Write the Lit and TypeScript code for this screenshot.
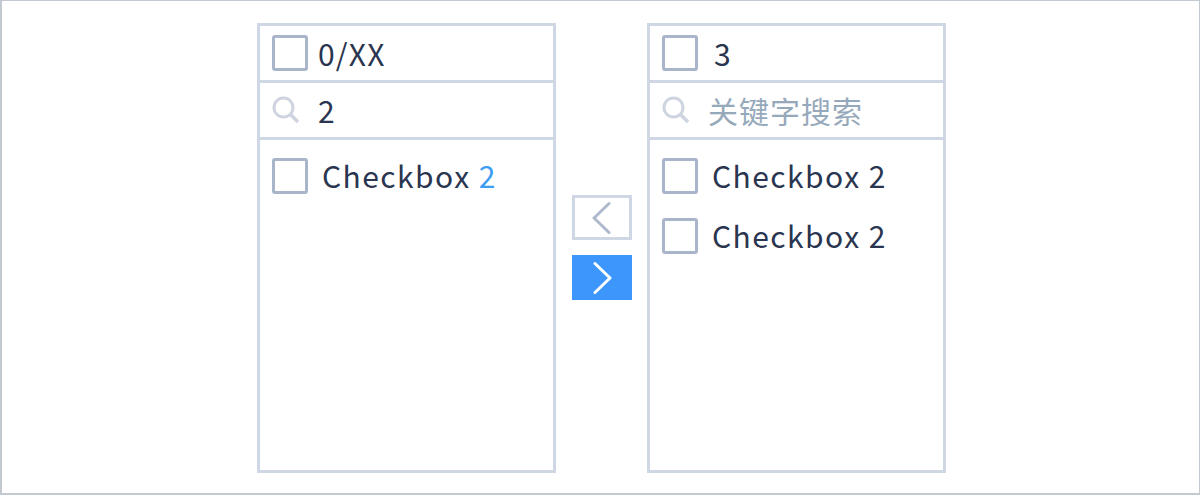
import { LitElement, html, css } from 'lit';
import { customElement } from 'lit/decorators.js';

const searchIcon = html`<svg class="search" width="28" height="28" viewBox="0 0 28 28" fill="none" stroke="#cfd5e0" stroke-width="3">
  <circle cx="11.5" cy="11.5" r="9.5"></circle>
  <path d="M18.5 18.5 L26 26" stroke-width="3.5"></path>
</svg>`;

@customElement('app-root')
class AppRoot extends LitElement {
  static styles = css`
    :host {
      display: block;
      width: 1200px;
      height: 495px;
      box-sizing: border-box;
      background: #fff;
      border: 2px solid #c3c9d0;
      border-right-width: 1px;
      border-top-width: 1px;
      font-family: 'Noto Sans CJK SC', 'Noto Sans', sans-serif;
      color: #2a3550;
      font-size: 30px;
    }
    .page {
      display: flex;
      align-items: center;
      gap: 15px;
      padding: 22px 0 0 255px;
    }
    .panel {
      width: 299px;
      height: 450px;
      box-sizing: border-box;
      border: 3px solid #cfd7e4;
    }
    .row {
      height: 57px;
      box-sizing: border-box;
      border-bottom: 3px solid #cfd7e4;
      display: flex;
      align-items: center;
      padding: 0 0 1px 12px;
    }
    .box {
      width: 36px;
      height: 36px;
      flex: none;
      box-sizing: border-box;
      border: 3px solid #a9b5ca;
      border-radius: 3px;
    }
    .count { margin-left: 10px; letter-spacing: 1.2px; }
    .count.wide { margin-left: 16px; }
    .search { flex: none; }
    .query { margin-left: 18px; }
    .hint { margin-left: 18px; color: #96a9bb; letter-spacing: 1px; }
    .list { padding-top: 18px; display: flex; flex-direction: column; gap: 24px; }
    .item { display: flex; align-items: center; height: 36px; padding-left: 12px; }
    .label { margin: 0 0 2px 14px; letter-spacing: 1.45px; white-space: nowrap; }
    .match { color: #3d9df2; }
    .arrows { display: flex; flex-direction: column; gap: 15px; margin: -1px 0 0 1px; }
    .arrow {
      width: 60px;
      height: 45px;
      box-sizing: border-box;
      display: flex;
      align-items: center;
      justify-content: center;
    }
    .arrow.off { border: 3px solid #cfd7e4; }
    .arrow.on { background: #3d96fb; }
  `;

  render() {
    return html`<div class="page">
      <section class="panel">
        <div class="row"><span class="box"></span><span class="count">0/XX</span></div>
        <div class="row">${searchIcon}<span class="query">2</span></div>
        <div class="list">
          <div class="item"><span class="box"></span><span class="label">Checkbox <span class="match">2</span></span></div>
        </div>
      </section>
      <div class="arrows">
        <div class="arrow off">
          <svg width="20" height="34" viewBox="0 0 20 34" fill="none" stroke="#adb9cc" stroke-width="3" stroke-linecap="round" stroke-linejoin="round"><path d="M17 2.5 L2 17 L17 31.5"></path></svg>
        </div>
        <div class="arrow on">
          <svg width="20" height="34" viewBox="0 0 20 34" fill="none" stroke="#fff" stroke-width="3" stroke-linecap="round" stroke-linejoin="round"><path d="M3 2.5 L18 17 L3 31.5"></path></svg>
        </div>
      </div>
      <section class="panel">
        <div class="row"><span class="box"></span><span class="count wide">3</span></div>
        <div class="row">${searchIcon}<span class="hint">关键字搜索</span></div>
        <div class="list">
          <div class="item"><span class="box"></span><span class="label">Checkbox 2</span></div>
          <div class="item"><span class="box"></span><span class="label">Checkbox 2</span></div>
        </div>
      </section>
    </div>`;
  }
}
